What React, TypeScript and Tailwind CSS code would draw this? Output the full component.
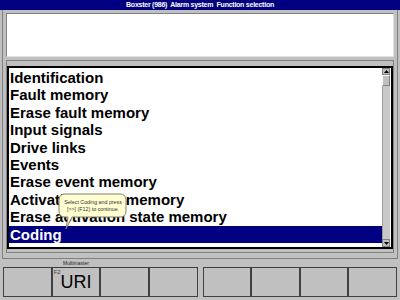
const ITEMS = [
  "Identification",
  "Fault memory",
  "Erase fault memory",
  "Input signals",
  "Drive links",
  "Events",
  "Erase event memory",
  "Activation state memory",
  "Erase activation state memory",
  "Coding",
];

const SELECTED = "Coding";

const FnButton = ({ label, fkey, text }: { label?: string; fkey?: string; text?: string }) => (
  <div className="flex flex-1 flex-col">
    <div className="h-[8px] text-center text-[5px] leading-[8px] text-[#202020]">{label}</div>
    <div className="flex h-[30px] flex-col border border-[#404040] bg-[#c0c0c0]">
      {fkey && <div className="pl-[1px] pt-[1px] text-[6px] leading-none text-[#404040]">{fkey}</div>}
      {text && <div className="-mt-[3px] text-center text-[18px] leading-[20px] text-black">{text}</div>}
    </div>
  </div>
);

export default function App() {
  return (
    <div className="relative h-[300px] w-[400px] overflow-hidden bg-[#c0c0c0] font-[Liberation_Sans,Arial,sans-serif]">
      {/* title bar */}
      <div className="h-[10px] whitespace-pre bg-[#000080] text-center text-[7px] font-bold leading-[10px] tracking-[-0.25px] text-white">
        Boxster (986)  Alarm system  Function selection
      </div>

      {/* main frame */}
      <div className="mx-[2px] h-[249px] border-x border-b border-[#808080] px-[3px] pt-[3px]">
        <div className="h-[44px] border border-[#808080] border-b-[#e0e0e0] border-r-[#e0e0e0] bg-white" />

        <div className="mt-[3px] border border-[#808080] pb-[3px] pr-0 pt-[5px]">
          <div className="flex h-[183px] border-2 border-black bg-white">
            <div className="flex-1 overflow-hidden pt-[1px]">
              {ITEMS.map((item) => (
                <div
                  key={item}
                  className={
                    item === SELECTED
                      ? "h-[17.4px] bg-[#000080] pl-[1px] text-[15px] font-bold leading-[17.4px] text-white"
                      : "h-[17.4px] pl-[1px] text-[15px] font-bold leading-[17.4px] text-black"
                  }
                >
                  {item}
                </div>
              ))}
            </div>

            {/* scrollbar */}
            <div className="mr-[1px] flex w-[8px] flex-col bg-[#c0c0c0]">
              <div className="flex h-[7px] items-center justify-center border border-[#808080] bg-[#c0c0c0]">
                <svg width="5" height="3" viewBox="0 0 5 3">
                  <path d="M2.5 0 L5 3 L0 3 Z" fill="#000" />
                </svg>
              </div>
              <div className="h-[11px] border border-[#808080] border-l-white border-t-white bg-[#c0c0c0]" />
              <div className="flex-1 border-l border-[#a0a0a0] bg-[#c8c8c8]" />
              <div className="flex h-[8px] items-center justify-center border border-[#808080] bg-[#c0c0c0]">
                <svg width="5" height="3" viewBox="0 0 5 3">
                  <path d="M0 0 L5 0 L2.5 3 Z" fill="#000" />
                </svg>
              </div>
            </div>
          </div>
        </div>
      </div>

      {/* function keys */}
      <div className="flex gap-[5px] px-[3px]">
        <div className="flex flex-1">
          <FnButton />
          <FnButton label="Multimaster" fkey="F2" text="URI" />
          <FnButton />
          <FnButton />
        </div>
        <div className="flex flex-1">
          <FnButton />
          <FnButton />
          <FnButton />
          <FnButton />
        </div>
      </div>

      {/* tooltip */}
      <div className="absolute left-[58px] top-[193px] h-[38px] w-[70px]">
        <svg width="70" height="38" viewBox="0 0 70 38" className="absolute left-0 top-0">
          <path
            d="M7 1 H62 Q68 1 68 7 V18 Q68 24 62 24 H14 L8 36 L10 24 H7 Q1 24 1 18 V7 Q1 1 7 1 Z"
            fill="#ffffd2"
            stroke="#808060"
            strokeWidth="1"
          />
        </svg>
        <div className="relative flex h-[25px] flex-col items-center justify-center pt-[1px] text-[5.3px] leading-[7.5px] text-[#303030]">
          <div>Select Coding and press</div>
          <div>[&gt;&gt;] (F12) to continue.</div>
        </div>
      </div>
    </div>
  );
}
